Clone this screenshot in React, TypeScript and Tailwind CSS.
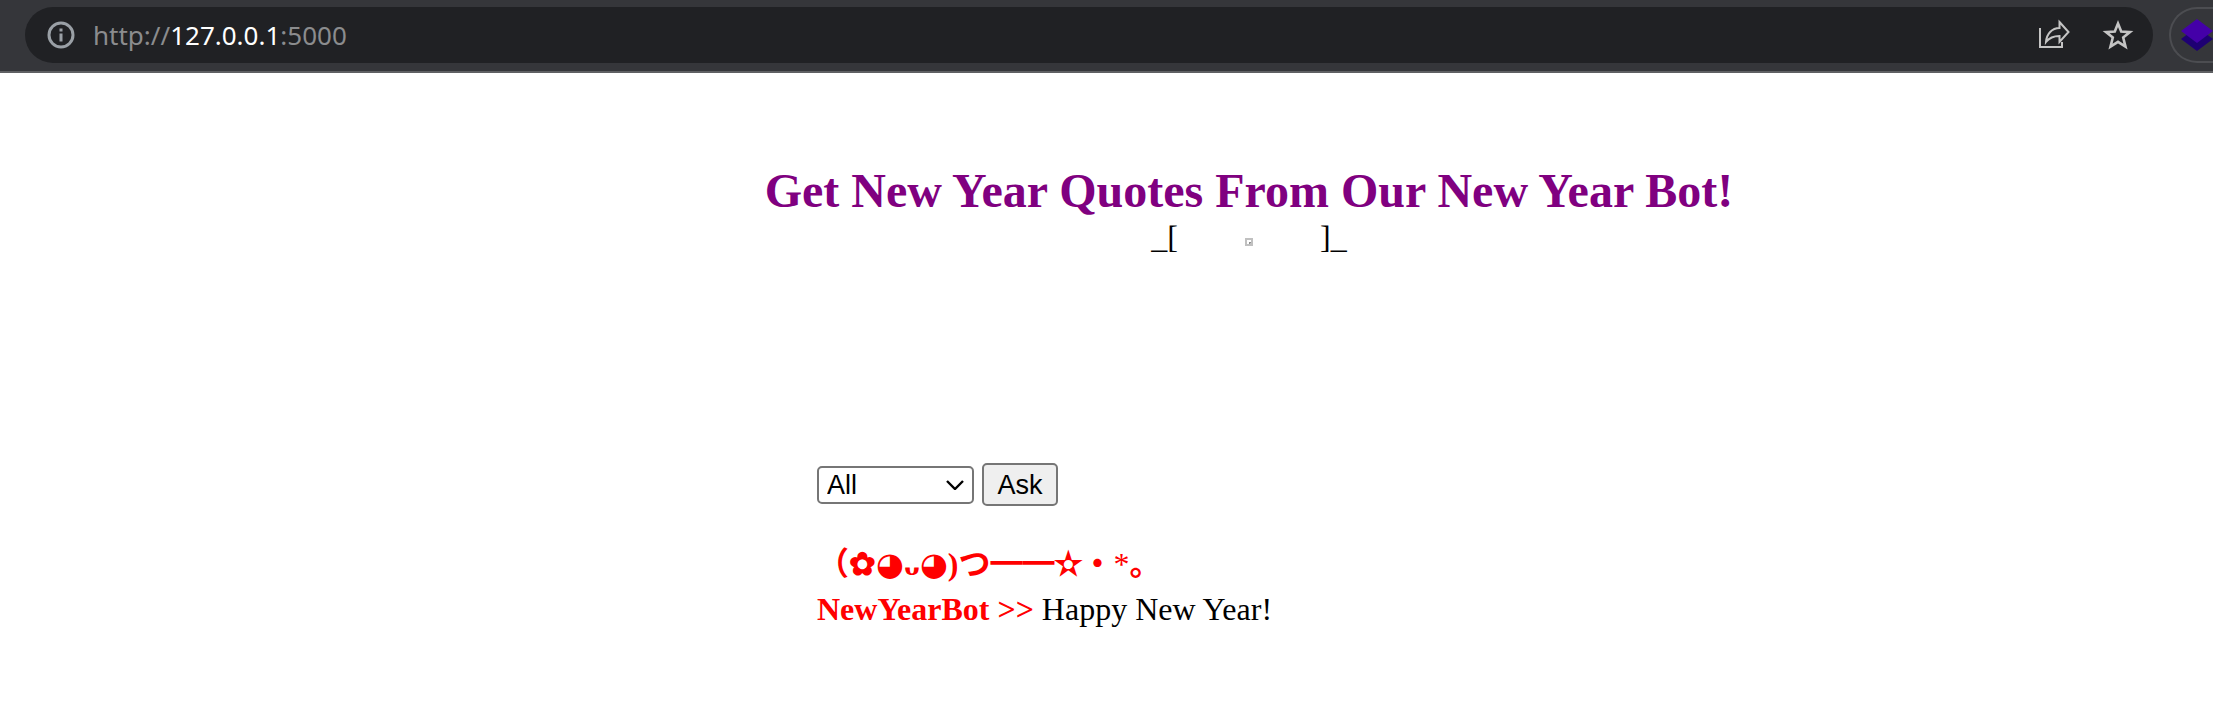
import React from "react";

function InfoIcon() {
  return (
    <svg className="size-7" viewBox="0 0 28 28" fill="none" aria-hidden="true">
      <circle cx="14" cy="14" r="12" stroke="#9aa0a6" strokeWidth="3" />
      <path d="M12.500 12.500h3v8h-3zM12.500 7.500h3v3h-3z" fill="#9aa0a6" />
    </svg>
  );
}

function ShareIcon() {
  return (
    <svg className="h-8 w-8" viewBox="0 0 32 32" fill="none" stroke="#c4c4c4" strokeWidth="2" aria-hidden="true">
      <path d="M2 9v19h22v-5" />
      <path d="M21.500 3l9 10-9 10v-6c-6 0-10 1.500-13.500 6 .5-8 6-14 13.500-14z" />
    </svg>
  );
}

function StarIcon() {
  return (
    <svg className="h-8 w-8" viewBox="0 0 32 32" fill="none" stroke="#c4c4c4" strokeWidth="2.6" aria-hidden="true">
      <path d="M16 4.500l3.200 8 8.800.6-6.800 5.500 2.300 9L16 22.800l-7.500 4.800 2.300-9L4 13.100l8.800-.6z" />
    </svg>
  );
}

function LayersIcon() {
  return (
    <svg className="h-8 w-8 shrink-0" viewBox="0 0 32 32" aria-hidden="true">
      <path d="M16 8l16 12-16 12L0 20z" fill="#1e0073" />
      <path d="M16 0l16 12-16 12L0 12z" fill="#4400a8" />
    </svg>
  );
}

function BrowserBar() {
  return (
    <header className="flex overflow-hidden border-b-2 border-[#5f6063] bg-[#35363a] pt-[7px] pb-2 pl-[25px]">
      <div className="flex h-14 min-w-0 flex-1 items-center rounded-full bg-[#202124] pr-[19px] pl-[22px]">
        <button type="button" aria-label="View site information">
          <InfoIcon />
        </button>
        <div className="ml-[18px] flex-1 font-['Noto_Sans','Open_Sans',sans-serif] text-[26px] leading-9 text-[#8b8c8e]">
          http://<span className="text-white">127.0.0.1</span>:5000
        </div>
        <button type="button" aria-label="Share this page">
          <ShareIcon />
        </button>
        <button type="button" aria-label="Bookmark this page" className="ml-8">
          <StarIcon />
        </button>
      </div>
      <button
        type="button"
        aria-label="Extension"
        className="ml-4 flex h-14 w-11 shrink-0 items-center rounded-l-full border-2 border-r-0 border-[#4c4d51] pl-[10px]"
      >
        <LayersIcon />
      </button>
    </header>
  );
}

function BrokenImage() {
  return (
    <svg className="mx-[67px] mt-2 size-2" viewBox="0 0 8 8" aria-hidden="true">
      <path d="M0 0h8v8H0zM2 2v4h2V4h2V2z" fill="#c0c0c0" fillRule="evenodd" />
      <path d="M4 4h2v1H5v1H4z" fill="#909090" />
    </svg>
  );
}

function Eye() {
  return <span className="font-['DejaVu_Sans',sans-serif] leading-none">◕</span>;
}

function Ornament({ children }: { children: string }) {
  return <span className="font-['DejaVu_Serif',serif] leading-none">{children}</span>;
}

export default function App() {
  return (
    <div className="min-h-screen bg-white font-['Liberation_Serif','DejaVu_Sans','Noto_Sans_CJK_JP',serif] text-[32px] leading-[37px] text-black">
      <BrowserBar />
      <main className="pt-[90px] pl-[285px]">
        <h2 className="text-center text-[48px] leading-[56px] font-bold text-[#800080]">
          Get New Year Quotes From Our New Year Bot!
        </h2>
        <div className="flex items-center justify-center">
          <span>_[</span>
          <BrokenImage />
          <span>]_</span>
        </div>
        <div className="mx-auto mt-[207px] w-[864px]">
          <form
            className="flex items-center gap-2 font-['Liberation_Sans',sans-serif] text-[27px] leading-8"
            onSubmit={(event) => event.preventDefault()}
          >
            <div className="relative">
              <select
                aria-label="Quote category"
                className="block h-[38px] w-[157px] appearance-none rounded-[5px] border-2 border-[#767676] bg-white pl-2"
              >
                <option>All</option>
              </select>
              <svg
                className="pointer-events-none absolute top-[14px] right-[10px] h-[10px] w-[18px]"
                viewBox="0 0 18 10"
                fill="none"
                stroke="black"
                strokeWidth="2.4"
                aria-hidden="true"
              >
                <path d="M1 1l8 8 8-8" />
              </svg>
            </div>
            <button type="submit" className="h-[43px] w-[76px] rounded-[5px] border-2 border-[#767676] bg-[#efefef]">
              Ask
            </button>
          </form>
          <p className="mt-9 leading-[45px]">
            <b className="text-[#ff0000]">
              <span className="font-['Noto_Sans_CJK_JP',sans-serif] leading-none">（</span>
              <Ornament>✿</Ornament>
              <Eye />ᴗ<Eye />)つ
              <span className="font-['Noto_Sans_CJK_JP',sans-serif] leading-none">━━</span>
              <Ornament>✫</Ornament>・<span className="font-normal">*</span>。
              <br />
              NewYearBot &gt;&gt;
            </b>{" "}
            Happy New Year!
          </p>
        </div>
      </main>
    </div>
  );
}
